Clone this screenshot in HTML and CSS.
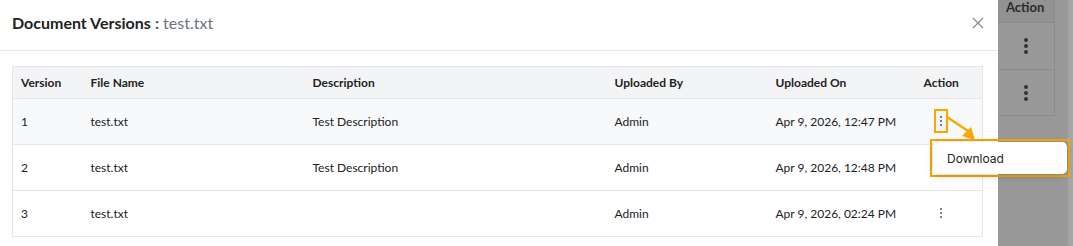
FILE: index.html
```html
<!DOCTYPE html>
<html>
<head>
<meta charset="utf-8">
<link rel="stylesheet" href="styles.css">
</head>
<body>
<div class="page">
  <div class="modal">
    <div class="modal-header">
      <div class="title"><b>Document Versions</b> <span class="sep">:</span> <span class="fname">test.txt</span></div>
      <svg class="close" width="12" height="12" viewBox="0 0 12 12"><path d="M1 1L11 11M11 1L1 11" stroke="#8a8a8a" stroke-width="1.2" fill="none"/></svg>
    </div>
    <div class="modal-body">
      <table class="versions">
        <colgroup>
          <col style="width:70px"><col style="width:222px"><col style="width:302px"><col style="width:161px"><col style="width:148px"><col>
        </colgroup>
        <thead>
          <tr><th>Version</th><th>File Name</th><th>Description</th><th>Uploaded By</th><th>Uploaded On</th><th>Action</th></tr>
        </thead>
        <tbody>
          <tr class="hover"><td>1</td><td>test.txt</td><td>Test Description</td><td>Admin</td><td>Apr 9, 2026, 12:47 PM</td><td><span class="kebab active"><i></i><i></i><i></i></span></td></tr>
          <tr><td>2</td><td>test.txt</td><td>Test Description</td><td>Admin</td><td>Apr 9, 2026, 12:48 PM</td><td></td></tr>
          <tr><td>3</td><td>test.txt</td><td></td><td>Admin</td><td>Apr 9, 2026, 02:24 PM</td><td><span class="kebab"><i></i><i></i><i></i></span></td></tr>
        </tbody>
      </table>
    </div>
  </div>
  <div class="backdrop">
    <div class="bg-table">
      <div class="bg-head">Action</div>
      <div class="bg-cell"><span class="kebab dark"><i></i><i></i><i></i></span></div>
      <div class="bg-cell"><span class="kebab dark"><i></i><i></i><i></i></span></div>
    </div>
    <div class="strip"></div>
  </div>
  <svg class="arrow" width="40" height="30" viewBox="0 0 40 30"><path d="M1 1L22 15" stroke="#f6a800" stroke-width="2.2" fill="none"/><path d="M16 20L29 24L25 11Z" fill="#f6a800"/></svg>
  <div class="menu-hl">
    <div class="menu"><span>Download</span></div>
  </div>
</div>
</body>
</html>
```
FILE: styles.css
```css
* { box-sizing: border-box; }
html, body { margin: 0; padding: 0; }
body { width: 1073px; height: 246px; overflow: hidden; font-family: Lato, "Open Sans", sans-serif; color: #222; }
.page { position: relative; display: flex; width: 1073px; height: 246px; }
.modal { width: 998px; height: 246px; background: #fff; }
.modal-header { height: 51px; border-bottom: 1px solid #e6e6e6; display: flex; align-items: center; justify-content: space-between; padding: 0 14px 5px 12px; }
.title { font-size: 16px; color: #222; }
.title b { font-weight: 700; }
.title .sep { font-weight: 700; color: #555; }
.title .fname { color: #6b7280; }
.close { margin-top: 1px; }
.modal-body { padding: 15px 14px 0 12px; }
.versions { width: 971px; border-collapse: collapse; table-layout: fixed; border: 1px solid #e4e6e9; font-size: 12px; }
.versions th { height: 32px; background: #f3f4f6; text-align: left; font-weight: 700; padding: 0 8px 1px; border-bottom: 1px solid #e4e6e9; color: #222; }
.versions td { height: 46px; padding: 0 8px 1px; border-bottom: 1px solid #e4e6e9; color: #222; }
.versions tr.hover td { background: #f8f9fa; }
.kebab { display: inline-flex; flex-direction: column; align-items: center; justify-content: center; gap: 2px; width: 14px; height: 16px; margin-left: 10px; vertical-align: middle; }
.kebab i { display: block; width: 2px; height: 2px; background: #555; border-radius: 1px; }
.kebab.active { width: 14px; height: 24px; margin-left: 10px; border: 2px solid #f6a800; background: #f1f2f4; }
.backdrop { flex: 1; background: #999; display: flex; }
.bg-table { width: 57px; height: 116px; border-right: 1px solid #8c8c8c; border-bottom: 1px solid #8c8c8c; }
.bg-head { height: 23px; background: #929292; border-bottom: 1px solid #8c8c8c; font-size: 13px; font-weight: 700; color: #2a2a2a; padding-left: 8px; line-height: 14px; }
.bg-cell { height: 46px; display: flex; align-items: center; justify-content: center; }
.bg-cell + .bg-cell { border-top: 1px solid #8c8c8c; }
.kebab.dark { margin: 0; gap: 2px; }
.kebab.dark i { width: 4px; height: 4px; border-radius: 2px; background: #333; }
.strip { margin-left: auto; width: 5px; height: 100%; background: #a6a6a6; }
.arrow { position: absolute; left: 946px; top: 116px; }
.menu-hl { position: absolute; left: 930px; top: 139px; width: 140px; height: 38px; border: 2px solid #f6a800; padding: 1px; }
.menu { height: 100%; background: #fff; border-radius: 5px; box-shadow: 0 2px 8px rgba(0,0,0,0.18); display: flex; align-items: center; padding-left: 14px; font-family: Inter, Roboto, sans-serif; font-size: 12px; color: #222; }
```
